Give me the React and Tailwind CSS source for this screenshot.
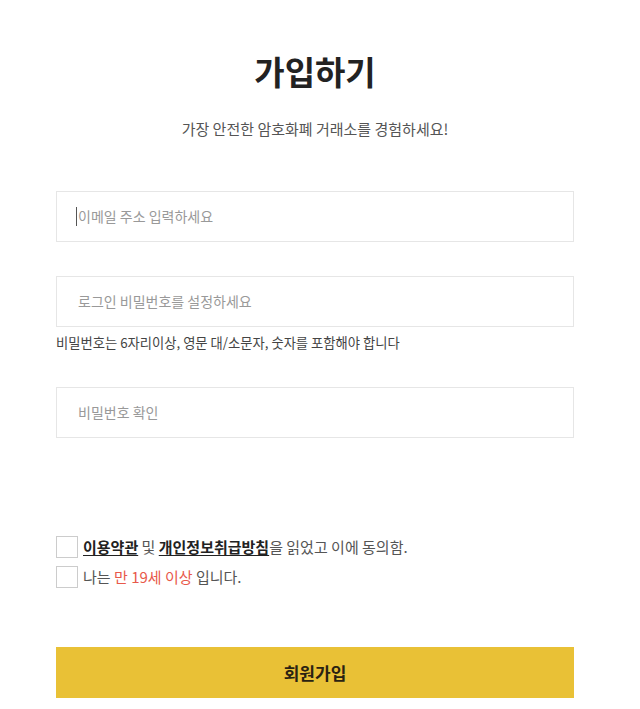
export default function App() {
  const font = { fontFamily: '"Noto Sans CJK KR", "Noto Sans", sans-serif' };
  return (
    <div className="min-h-[709px] bg-white" style={font}>
      <div className="ml-[56px] w-[518px] pt-[46px]">
        <h1 className="text-center text-[33px] font-bold leading-[50px] text-[#222]">가입하기</h1>
        <p className="mt-[22px] text-center text-[15px] leading-[22px] text-[#555]">가장 안전한 암호화폐 거래소를 경험하세요!</p>

        <div className="mt-[51px]">
          <div className="flex h-[51px] items-center border border-[#e6e6e6] pl-[19px]">
            <span className="mr-[1px] h-[19px] w-px bg-[#555]"></span>
            <span className="text-[14px] text-[#999]">이메일 주소 입력하세요</span>
          </div>
          <div className="mt-[34px] flex h-[51px] items-center border border-[#e6e6e6] pl-[21px]">
            <span className="text-[14px] text-[#999]">로그인 비밀번호를 설정하세요</span>
          </div>
          <p className="mt-[6px] text-[13.3px] leading-[20px] text-[#444]">비밀번호는 6자리이상, 영문 대/소문자, 숫자를 포함해야 합니다</p>
          <div className="mt-[34px] flex h-[51px] items-center border border-[#e6e6e6] pl-[21px]">
            <span className="text-[14px] text-[#999]">비밀번호 확인</span>
          </div>
        </div>

        <div className="mt-[98px] flex flex-col gap-[7px]">
          <label className="flex items-center gap-[5px] text-[15px] text-[#555]">
            <span className="h-[22px] w-[22px] border border-[#ccc] bg-white"></span>
            <span>
              <span className="font-bold text-[#222] underline underline-offset-2">이용약관</span> 및{' '}
              <span className="font-bold text-[#222] underline underline-offset-2">개인정보취급방침</span>을 읽었고 이에 동의함.
            </span>
          </label>
          <label className="flex items-center gap-[5px] text-[15px] text-[#555]">
            <span className="h-[22px] w-[22px] border border-[#ccc] bg-white"></span>
            <span>
              나는 <span className="text-[#e8594a]">만 19세 이상</span> 입니다.
            </span>
          </label>
        </div>

        <button className="mt-[59px] flex h-[51px] w-full items-center justify-center bg-[#e9c136] text-[17px] font-bold text-[#2a2212]">
          회원가입
        </button>
      </div>
    </div>
  );
}
